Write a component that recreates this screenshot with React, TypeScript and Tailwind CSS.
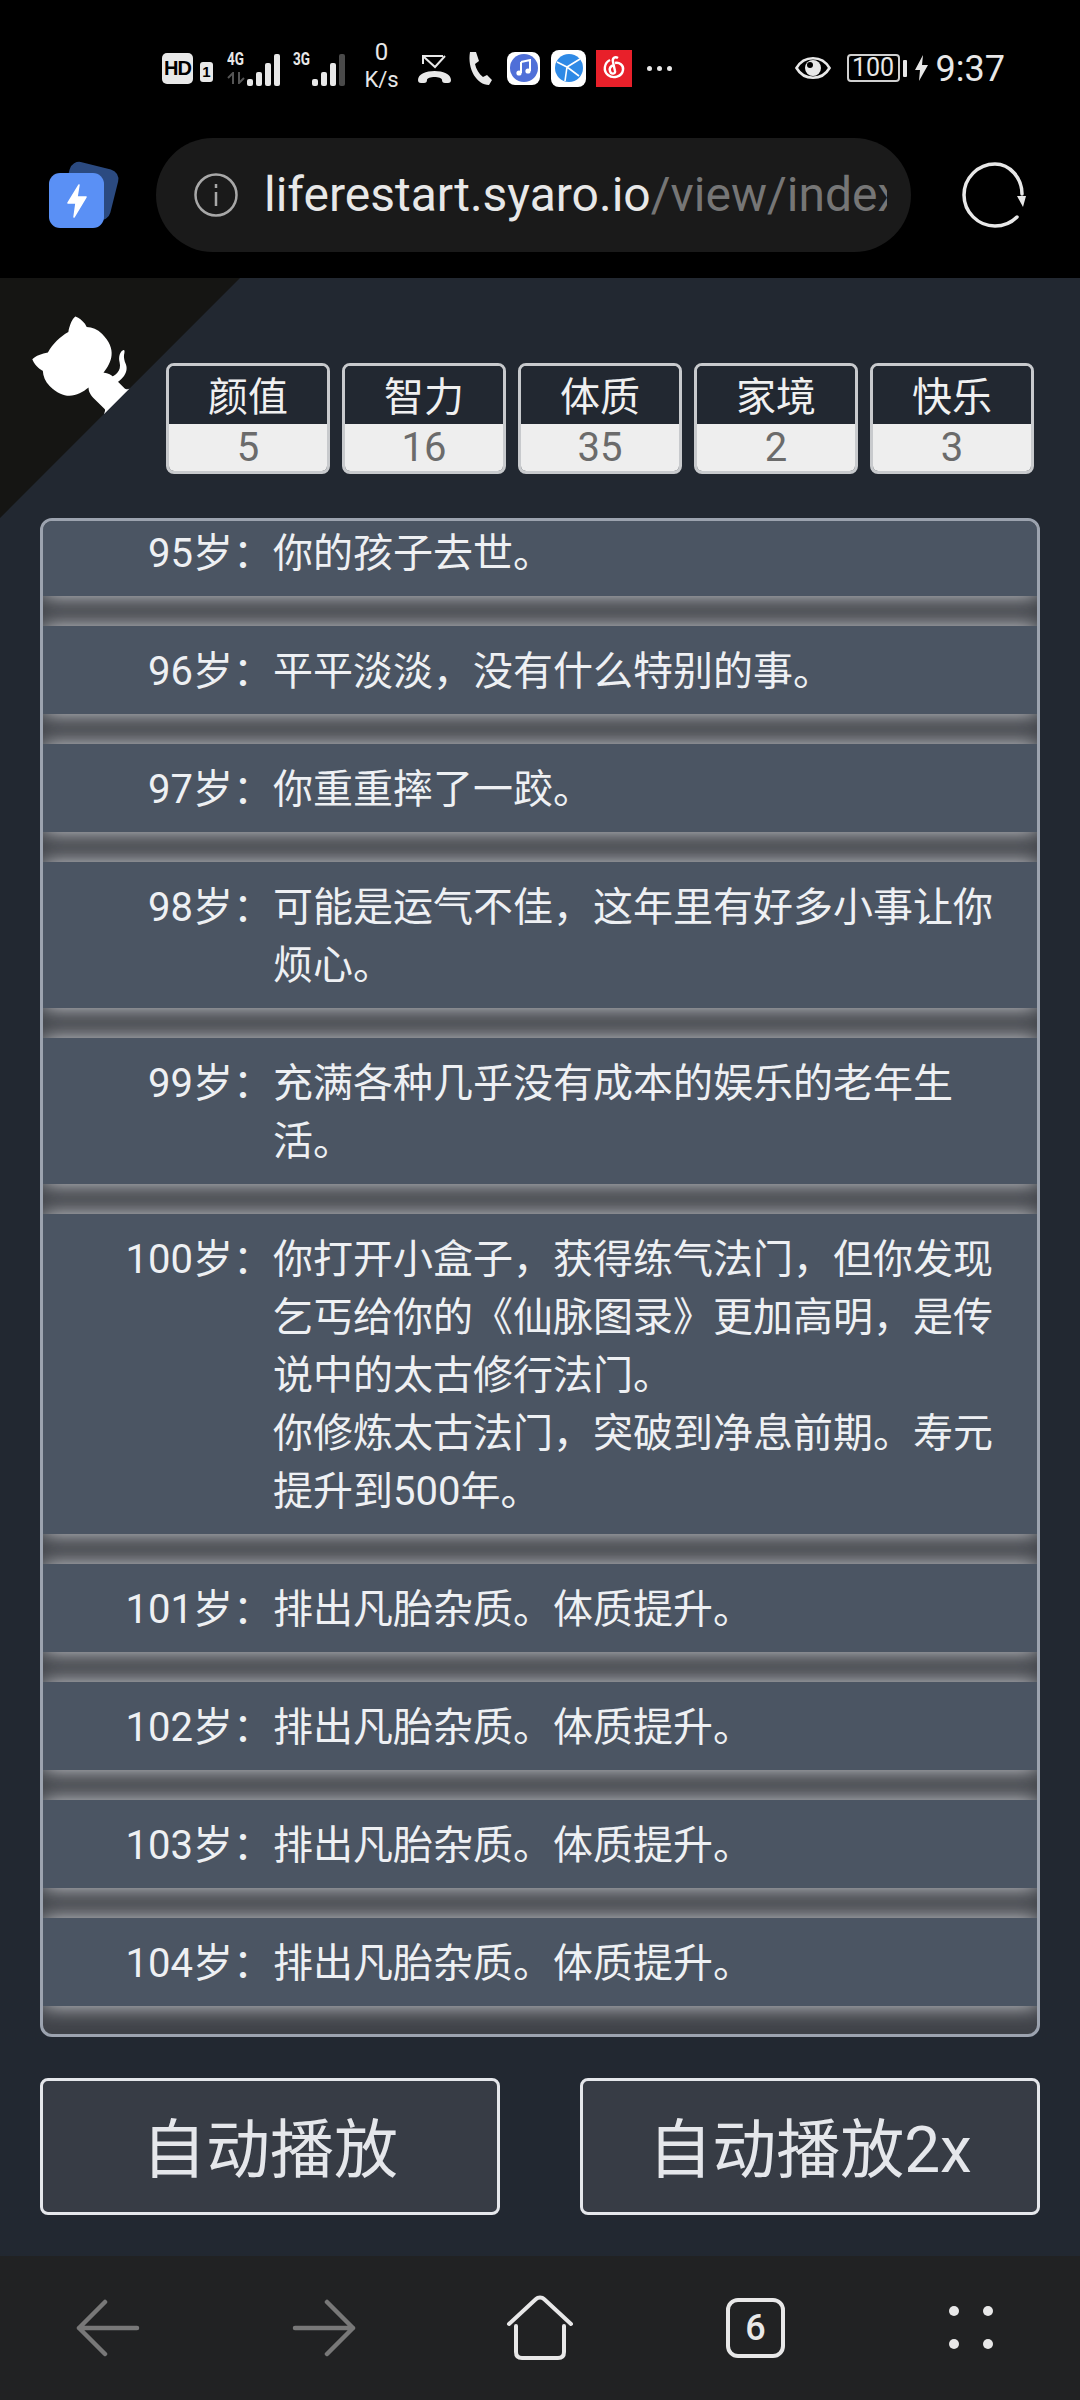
import React from 'react';

const FONT = "font-['Roboto','Noto_Sans_CJK_SC',sans-serif]";

const stats = [
  { label: '颜值', value: 5 },
  { label: '智力', value: 16 },
  { label: '体质', value: 35 },
  { label: '家境', value: 2 },
  { label: '快乐', value: 3 },
];

const events: { age: number; lines: string[] }[] = [
  { age: 95, lines: ['你的孩子去世。'] },
  { age: 96, lines: ['平平淡淡，没有什么特别的事。'] },
  { age: 97, lines: ['你重重摔了一跤。'] },
  { age: 98, lines: ['可能是运气不佳，这年里有好多小事让你烦心。'] },
  { age: 99, lines: ['充满各种几乎没有成本的娱乐的老年生活。'] },
  {
    age: 100,
    lines: ['你打开小盒子，获得练气法门，但你发现乞丐给你的《仙脉图录》更加高明，是传说中的太古修行法门。', '你修炼太古法门，突破到净息前期。寿元提升到500年。'],
  },
  { age: 101, lines: ['排出凡胎杂质。体质提升。'] },
  { age: 102, lines: ['排出凡胎杂质。体质提升。'] },
  { age: 103, lines: ['排出凡胎杂质。体质提升。'] },
  { age: 104, lines: ['排出凡胎杂质。体质提升。'] },
];

function Signal({ on }: { on: number }) {
  const heights = [7, 14, 23, 32];
  return (
    <div className="flex items-end gap-[3px] h-[32px]">
      {heights.map((h, i) => (
        <div key={i} className={`w-[6px] rounded-[2px] ${i < on ? 'bg-[#e8e8e8]' : 'bg-[#4a4a4a]'}`} style={{ height: h }} />
      ))}
    </div>
  );
}

function StatusBar() {
  return (
    <div className="h-[138px] flex items-start pt-[50px] pl-[162px] pr-[75px] justify-between text-[#e8e8e8]">
      <div className="flex items-center h-[36px]">
        <div className="w-[31px] h-[31px] rounded-[5px] bg-[#e8e8e8] text-black text-[20px] font-bold flex items-center justify-center tracking-[-1px] font-['Liberation_Sans',sans-serif]">
          HD
        </div>
        <div className="w-[13px] h-[20px] ml-[7px] mt-[8px] rounded-[3px] bg-[#e8e8e8] text-black text-[15px] font-bold flex items-center justify-center font-['Liberation_Sans',sans-serif]">
          1
        </div>
        <div className="relative ml-[14px] w-[53px] h-[36px] flex items-end justify-end">
          <span className="absolute left-0 top-0 text-[18px] leading-[18px] font-bold scale-x-75 origin-left">4G</span>
          <svg className="absolute left-0 bottom-[2px]" width="18" height="12" viewBox="0 0 18 12" fill="none" stroke="#555555" strokeWidth="2">
            <path d="M6 12V1L1 6M12 0v11l5-5" />
          </svg>
          <Signal on={4} />
        </div>
        <div className="relative ml-[13px] w-[52px] h-[36px] flex items-end justify-end">
          <span className="absolute left-0 top-0 text-[18px] leading-[18px] font-bold scale-x-75 origin-left">3G</span>
          <Signal on={3} />
        </div>
        <div className="ml-[18px] w-[37px] flex flex-col items-center text-[24px] leading-[28px] -mt-[5px]">
          <span>0</span>
          <span className="text-[22px]">K/s</span>
        </div>
        <svg className="ml-[17px]" width="35" height="36" viewBox="0 0 35 36" fill="none">
          <path d="M6 14V6h20M7 7l11 10 10-11" stroke="#e8e8e8" strokeWidth="2" />
          <path d="M1 30c0-12 33-12 33 0 0 2-1 3-3 3h-3c-2 0-3-1-3-3 0-4-15-4-15 0 0 2-1 3-3 3H4c-2 0-3-1-3-3z" fill="#e8e8e8" />
        </svg>
        <svg className="ml-[15px]" width="26" height="36" viewBox="0 0 26 36" fill="none">
          <path d="M3 2h6l3 9-4 3c1 5 4 10 8 13l4-2 5 5-3 5c-12 0-22-16-19-33z" fill="#e8e8e8" />
        </svg>
        <div className="ml-[14px] w-[33px] h-[33px] rounded-[8px] bg-white flex items-center justify-center">
          <div className="w-[28px] h-[28px] rounded-full bg-[#4f6fd8] flex items-center justify-center">
            <svg width="18" height="18" viewBox="0 0 18 18">
              <path d="M6 3l9-2v11" stroke="#fff" strokeWidth="2" fill="none" />
              <path d="M6 3v11" stroke="#fff" strokeWidth="2" />
              <circle cx="4" cy="14" r="2.6" fill="#fff" />
              <circle cx="13" cy="12" r="2.6" fill="#fff" />
            </svg>
          </div>
        </div>
        <div className="ml-[11px] w-[35px] h-[37px] rounded-[8px] bg-white flex items-center justify-center">
          <svg width="30" height="30" viewBox="0 0 30 30">
            <circle cx="15" cy="15" r="14" fill="#2f8ae6" />
            <path d="M3 9l10 5 13-8M13 14l-2 14M13 14l12 9" stroke="#fff" strokeWidth="1.6" fill="none" />
          </svg>
        </div>
        <div className="ml-[10px] w-[36px] h-[37px] bg-[#e8202a] flex items-center justify-center">
          <svg width="26" height="26" viewBox="0 0 26 26" fill="none" stroke="#fff" strokeWidth="2.4">
            <path d="M17 3c-3-2-6 0-5 4l2 9c1 3-4 4-5 0-1-3 1-5 4-6" />
            <path d="M9 5C3 8 2 16 7 20c5 4 14 2 15-5 1-5-4-8-8-7" />
          </svg>
        </div>
        <div className="ml-[15px] flex gap-[5px]">
          <div className="w-[5px] h-[5px] rounded-full bg-[#e8e8e8]" />
          <div className="w-[5px] h-[5px] rounded-full bg-[#e8e8e8]" />
          <div className="w-[5px] h-[5px] rounded-full bg-[#e8e8e8]" />
        </div>
      </div>
      <div className="flex items-center h-[36px]">
        <svg className="-ml-[2px]" width="36" height="28" viewBox="0 0 36 28" fill="none">
          <path d="M1.5 14C9 1 27 1 34.5 14 27 27 9 27 1.5 14z" stroke="#e8e8e8" strokeWidth="2.6" />
          <circle cx="18" cy="14" r="8" fill="#e8e8e8" />
          <circle cx="15" cy="11" r="3" fill="#000" />
        </svg>
        <div className="ml-[16px] w-[53px] h-[28px] rounded-[4px] border-2 border-[#d0d0d0] text-[25px] leading-[24px] flex items-center justify-center">
          100
        </div>
        <div className="ml-[3px] w-[4px] h-[17px] rounded-[1px] bg-[#e8e8e8]" />
        <svg className="ml-[8px]" width="13" height="26" viewBox="0 0 13 26">
          <path d="M8 0L0 15h5l-1 11 9-16H7z" fill="#e8e8e8" />
        </svg>
        <span className="ml-[8px] mt-[2px] text-[36px] leading-[36px]">9:37</span>
      </div>
    </div>
  );
}

function AddressBar() {
  return (
    <div className="h-[140px] flex items-start text-[#e8e8e8]">
      <div className="relative ml-[49px] w-[68px] h-[70px] mt-[24px]">
        <div className="absolute left-[16px] top-[3px] w-[50px] h-[52px] rounded-[10px] bg-[#2b4a80] rotate-[14deg]" />
        <div className="absolute left-0 top-[11px] w-[55px] h-[55px] rounded-[11px] bg-[#5a90f5] flex items-center justify-center">
          <svg width="24" height="36" viewBox="0 0 24 36">
            <path d="M14 2L3 20h8l-2 14 12-20h-9z" fill="#fff" stroke="#fff" strokeWidth="1.5" strokeLinejoin="round" />
          </svg>
        </div>
      </div>
      <div className="ml-[39px] w-[755px] h-[114px] rounded-full bg-[#1a1a1a] flex items-center pl-[38px]">
        <svg width="44" height="44" viewBox="0 0 44 44" fill="none" stroke="#a8a8a8" strokeWidth="2.5">
          <circle cx="22" cy="22" r="20.5" />
          <path d="M22 19v14M22 11v4" />
        </svg>
        <div className="ml-[26px] w-[623px] overflow-hidden whitespace-nowrap text-[48px] leading-[60px]">
          liferestart.syaro.io<span className="text-[#767676]">/view/index</span>
        </div>
      </div>
      <svg className="ml-[49px] mt-[22px]" width="70" height="70" viewBox="0 0 70 70" fill="none">
        <path d="M62 34C62 18 50 4 35 4 18 4 4 18 4 35s14 31 31 31c9 0 16-3 22-9" stroke="#e8e8e8" strokeWidth="3.5" strokeLinecap="round" />
        <path d="M57 36h9l-3 11z" fill="#e8e8e8" />
      </svg>
    </div>
  );
}

function StatCard({ label, value }: { label: string; value: number }) {
  return (
    <div className="w-[164px] h-[111px] rounded-[8px] border-[3px] border-[#c8cacd] overflow-hidden flex flex-col">
      <div className="h-[58px] bg-[#222831] text-[#f0f0f0] text-[40px] leading-[64px] text-center">{label}</div>
      <div className="flex-1 bg-[#eeeeee] text-[#6b6b6b] text-[40px] leading-[48px] text-center">{value}</div>
    </div>
  );
}

function EventRow({ age, lines }: { age: number; lines: string[] }) {
  return (
    <div className="flex bg-[#4b5563] pt-[17px] pb-[13px] mb-[30px] text-[#eef0f3] text-[40px] leading-[58px] shadow-[0_0_20px_rgba(229,231,235,0.9)]">
      <div className="w-[230px] shrink-0 text-right">{age}岁：</div>
      <div className="w-[737px]">
        {lines.map((line, i) => (
          <div key={i}>{line}</div>
        ))}
      </div>
    </div>
  );
}

function BottomNav() {
  return (
    <div className="h-[144px] bg-[#212223] flex items-start">
      <svg className="ml-[76px] mt-[43px]" width="64" height="58" viewBox="0 0 64 58" fill="none" stroke="#787878" strokeWidth="4.5" strokeLinecap="round" strokeLinejoin="round">
        <path d="M29 3L3 29l26 26M3 29h58" />
      </svg>
      <svg className="ml-[152px] mt-[43px]" width="64" height="58" viewBox="0 0 64 58" fill="none" stroke="#787878" strokeWidth="4.5" strokeLinecap="round" strokeLinejoin="round">
        <path d="M35 3l26 26-26 26M61 29H3" />
      </svg>
      <svg className="ml-[150px] mt-[39px]" width="68" height="66" viewBox="0 0 68 66" fill="none" stroke="#e8e8e8" strokeWidth="4" strokeLinecap="round" strokeLinejoin="round">
        <path d="M3 29L30 4c2-2 6-2 8 0l27 25" />
        <path d="M10 31v26c0 4 2 6 6 6h36c4 0 6-2 6-6V31" />
      </svg>
      <div className="ml-[152px] mt-[42px] w-[59px] h-[60px] rounded-[12px] border-[4px] border-[#e8e8e8] flex items-center justify-center text-[#e8e8e8] text-[36px] font-medium">
        6
      </div>
      <div className="ml-[164px] mt-[50px] grid grid-cols-2 gap-x-[24px] gap-y-[23px]">
        <div className="w-[10px] h-[10px] rounded-full bg-[#e8e8e8]" />
        <div className="w-[10px] h-[10px] rounded-full bg-[#e8e8e8]" />
        <div className="w-[10px] h-[10px] rounded-full bg-[#e8e8e8]" />
        <div className="w-[10px] h-[10px] rounded-full bg-[#e8e8e8]" />
      </div>
    </div>
  );
}

export default function App() {
  return (
    <div className={`w-[1080px] h-[2400px] bg-black flex flex-col overflow-hidden ${FONT}`}>
      <StatusBar />
      <AddressBar />
      <div className="relative flex-1 bg-[#222831] px-[40px] flex flex-col">
        <svg className="absolute left-0 top-0 -scale-x-100" width="240" height="240" viewBox="0 0 250 250">
          <path d="M0,0 L115,115 L130,115 L142,142 L250,250 L250,0 Z" fill="#151513" />
          <path d="M128.3,109.0 C113.8,99.7 119.0,89.6 119.0,89.6 C122.0,82.7 120.5,78.6 120.5,78.6 C119.2,72.0 123.4,76.3 123.4,76.3 C127.3,80.9 125.5,87.3 125.5,87.3 C122.9,97.6 130.6,101.9 134.4,103.2" fill="#fff" />
          <path d="M115.0,115.0 C114.9,115.1 118.7,116.5 119.8,115.4 L133.7,101.6 C136.9,99.2 139.9,98.4 142.2,98.6 C133.8,88.0 127.5,74.4 143.8,58.0 C148.5,53.4 154.0,51.2 159.7,51.0 C160.3,49.4 163.2,43.6 171.4,40.1 C171.4,40.1 176.1,42.5 178.8,56.2 C183.1,58.6 187.2,61.8 190.9,65.4 C194.5,69.0 197.7,73.2 200.1,77.6 C213.8,80.2 216.3,84.9 216.3,84.9 C212.7,93.1 206.9,96.0 205.4,96.6 C205.1,102.4 203.0,107.8 198.3,112.5 C181.9,128.9 168.3,122.5 157.7,114.1 C157.9,116.9 156.7,120.9 152.7,124.9 L141.0,136.5 C139.8,137.7 141.6,141.9 141.8,141.8 Z" fill="#fff" />
        </svg>
        <div className="relative flex justify-end gap-[12px] pt-[85px] pr-[6px]">
          {stats.map((s) => (
            <StatCard key={s.label} label={s.label} value={s.value} />
          ))}
        </div>
        <div className="mt-[44px] h-[1519px] rounded-[12px] border-[3px] border-[#9ca3af] overflow-hidden bg-[#3f4248]">
          <div className="-mt-[13px]">
            {events.map((e) => (
              <EventRow key={e.age} age={e.age} lines={e.lines} />
            ))}
          </div>
        </div>
        <div className="mt-[41px] flex justify-between">
          <button className="w-[460px] h-[137px] pt-[8px] rounded-[8px] border-[3px] border-[#e5e7eb] bg-[#373c45] text-[#e5e7eb] text-[64px]">自动播放</button>
          <button className="w-[460px] h-[137px] pt-[8px] rounded-[8px] border-[3px] border-[#e5e7eb] bg-[#373c45] text-[#e5e7eb] text-[64px]">自动播放2x</button>
        </div>
      </div>
      <BottomNav />
    </div>
  );
}
